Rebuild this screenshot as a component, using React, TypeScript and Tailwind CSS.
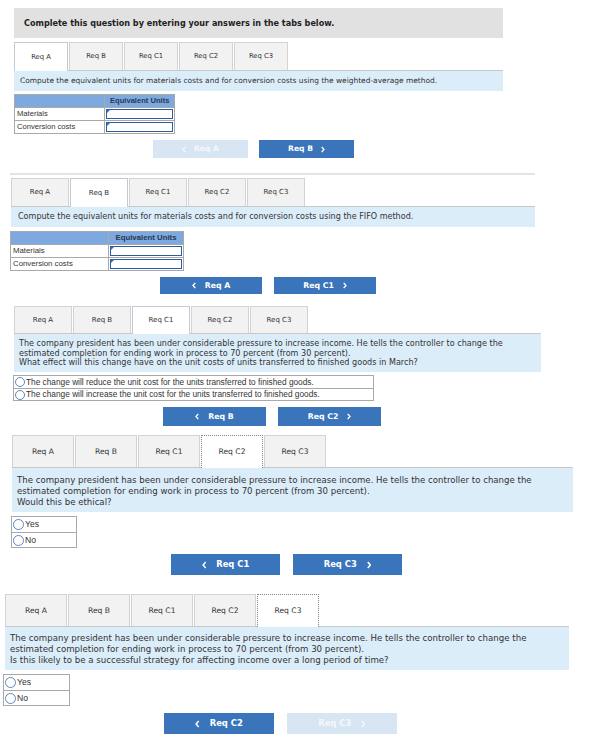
import React from "react";

const verdana = "[font-family:'DejaVu_Sans',Verdana,sans-serif]";
const arial = "[font-family:'Liberation_Sans',Arial,sans-serif]";

const TABS = ["Req A", "Req B", "Req C1", "Req C2", "Req C3"];

type TabsProps = {
  active: number;
  row: string;
  tab: string;
  dotted?: boolean;
};

function Tabs({ active, row, tab, dotted }: TabsProps) {
  return (
    <div className={`flex items-end gap-[1px] ${row}`}>
      {TABS.map((t, i) => {
        const on = i === active;
        const look = on
          ? dotted
            ? "bg-white border border-dotted border-[#7b8795] border-b-0 relative z-10 -mb-px h-[calc(100%+1px)]"
            : "bg-white border border-[#c3cad3] border-b-0 relative z-10 -mb-px h-[calc(100%+1px)]"
          : "bg-[#f2f2f2] border border-[#d3d3d3] border-b-0 h-full";
        return (
          <div
            key={t}
            className={`flex items-center justify-center text-[#333] ${verdana} ${tab} ${look}`}
          >
            {t}
          </div>
        );
      })}
    </div>
  );
}

function Chevron({ dir, cls }: { dir: "l" | "r"; cls: string }) {
  return (
    <svg viewBox="0 0 6 10" className={cls} fill="none" stroke="currentColor" strokeWidth="2">
      {dir === "l" ? <polyline points="5,1 1.5,5 5,9" /> : <polyline points="1,1 4.5,5 1,9" />}
    </svg>
  );
}

type NavProps = {
  prev: string;
  next: string;
  prevOff?: boolean;
  nextOff?: boolean;
  wrap: string;
  btn: string;
  icon: string;
};

function Nav({ prev, next, prevOff, nextOff, wrap, btn, icon }: NavProps) {
  const on = "bg-[#3a75bb] text-white";
  const off = "bg-[#d8e5f3] text-[#f4f8fc]";
  return (
    <div className={`flex ${wrap}`}>
      <div className={`flex items-center justify-center font-bold ${verdana} ${btn} ${prevOff ? off : on}`}>
        <Chevron dir="l" cls={icon} />
        <span>{prev}</span>
      </div>
      <div className={`flex items-center justify-center font-bold ${verdana} ${btn} ${nextOff ? off : on}`}>
        <span>{next}</span>
        <Chevron dir="r" cls={icon} />
      </div>
    </div>
  );
}

function InputCell({ cls }: { cls: string }) {
  return (
    <div className={`relative border border-[#2d5d9f] bg-white ${cls}`}>
      <div className="absolute left-0 top-0 w-0 h-0 border-t-[3px] border-r-[3px] border-t-[#2d6fd0] border-r-transparent" />
    </div>
  );
}

function UnitsTable({ wrap, col1, col2, head, row, text }: { wrap: string; col1: string; col2: string; head: string; row: string; text: string }) {
  return (
    <div className={`border border-[#a9a9a9] ${arial} ${text} text-[#333] ${wrap}`}>
      <div className={`flex bg-[#7da8e0] ${head}`}>
        <div className={`${col1} border-r border-[#a9a9a9]`} />
        <div className={`${col2} flex items-center justify-center font-bold text-[#2a3a50]`}>Equivalent Units</div>
      </div>
      {["Materials", "Conversion costs"].map((r) => (
        <div key={r} className={`flex border-t border-[#a9a9a9] ${row}`}>
          <div className={`${col1} flex items-center pl-[2px] border-r border-[#a9a9a9]`}>{r}</div>
          <div className={`${col2} p-px`}>
            <InputCell cls="h-full" />
          </div>
        </div>
      ))}
    </div>
  );
}

function Radio({ cls }: { cls: string }) {
  return <span className={`inline-block shrink-0 rounded-full border border-[#5f86bd] bg-white ${cls}`} />;
}

function Choices({ items, wrap, row, dot, text }: { items: string[]; wrap: string; row: string; dot: string; text: string }) {
  return (
    <div className={`border border-[#a9a9a9] bg-white ${arial} ${text} text-[#333] ${wrap}`}>
      {items.map((it, i) => (
        <div key={it} className={`flex items-center gap-[1px] pl-[1px] ${i > 0 ? "border-t border-[#a9a9a9]" : ""} ${row}`}>
          <Radio cls={dot} />
          <span>{it}</span>
        </div>
      ))}
    </div>
  );
}

const LEAD =
  "The company president has been under considerable pressure to increase income. He tells the controller to change the";
const EST = "estimated completion for ending work in process to 70 percent (from 30 percent).";

export default function App() {
  return (
    <div className="w-[598px] h-[740px] bg-white overflow-hidden">
      {/* Req A */}
      <div className="pt-[8px] pl-[14px] w-[503px]">
        <div className={`h-[30px] bg-[#e1e1e1] flex items-center pl-[10px] font-bold text-[8.1px] text-[#222] ${verdana}`}>
          Complete this question by entering your answers in the tabs below.
        </div>
        <Tabs active={0} row="mt-[4px] h-[28px]" tab="w-[54px] text-[6.8px]" />
        <div className={`h-[21px] bg-[#dcedfa] border-t border-[#c8c8c8] flex items-center pl-[6px] text-[7.46px] text-[#333] ${verdana}`}>
          Compute the equivalent units for materials costs and for conversion costs using the weighted-average method.
        </div>
        <UnitsTable
          wrap="mt-[3px] w-[161px]"
          col1="w-[91px]"
          col2="w-[69px]"
          head="h-[12px]"
          row="h-[13px]"
          text="text-[7.6px]"
        />
        <Nav
          prev="Req A"
          next="Req B"
          prevOff
          wrap="mt-[6px] pl-[139px] gap-[11px]"
          btn="w-[95px] h-[18px] gap-[8px] text-[7.6px]"
          icon="w-[4px] h-[7px]"
        />
      </div>

      {/* Req B */}
      <div className="pl-[10px] w-[535px]">
        <div className="mt-[15px] h-[2px] bg-[#e4e4e4]" />
        <Tabs active={1} row="mt-[3px] pl-[1px] h-[28px]" tab="w-[58px] text-[7px]" />
        <div className={`h-[21px] bg-[#dcedfa] border-t border-[#c8c8c8] flex items-center pl-[7px] ml-[1px] text-[8.05px] text-[#333] ${verdana}`}>
          Compute the equivalent units for materials costs and for conversion costs using the FIFO method.
        </div>
        <UnitsTable
          wrap="mt-[4px] w-[174px]"
          col1="w-[98px]"
          col2="w-[74px]"
          head="h-[12px]"
          row="h-[13px]"
          text="text-[7.8px]"
        />
        <Nav
          prev="Req A"
          next="Req C1"
          wrap="mt-[6px] pl-[150px] gap-[12px]"
          btn="w-[102px] h-[17px] gap-[9px] text-[7.8px]"
          icon="w-[4px] h-[7px]"
        />
      </div>

      {/* Req C1 */}
      <div className="pl-[14px] w-[541px]">
        <Tabs active={2} row="mt-[12px] h-[27px]" tab="w-[58px] text-[7px]" />
        <div className={`h-[39px] bg-[#dcedfa] border-t border-[#c8c8c8] pl-[5px] pt-[5px] text-[8.08px] leading-[9.5px] text-[#333] ${verdana}`}>
          <div>{LEAD}</div>
          <div>{EST}</div>
          <div>What effect will this change have on the unit costs of units transferred to finished goods in March?</div>
        </div>
        <Choices
          items={[
            "The change will reduce the unit cost for the units transferred to finished goods.",
            "The change will increase the unit cost for the units transferred to finished goods.",
          ]}
          wrap="mt-[3px] -ml-[1px] w-[361px]"
          row="h-[12px]"
          dot="w-[10px] h-[10px]"
          text="text-[8.3px]"
        />
        <Nav
          prev="Req B"
          next="Req C2"
          wrap="mt-[6px] pl-[149px] gap-[12px]"
          btn="w-[103px] h-[19px] gap-[9px] text-[7.8px]"
          icon="w-[4px] h-[7px]"
        />
      </div>

      {/* Req C2 */}
      <div className="pl-[12px] w-[573px]">
        <Tabs active={3} row="mt-[9px] h-[32px]" tab="w-[62px] text-[7.6px]" dotted />
        <div className={`h-[45px] bg-[#dcedfa] border-t border-[#c8c8c8] pl-[5px] pt-[7px] text-[8.6px] leading-[11px] text-[#333] ${verdana}`}>
          <div>{LEAD}</div>
          <div>{EST}</div>
          <div>Would this be ethical?</div>
        </div>
        <Choices
          items={["Yes", "No"]}
          wrap="mt-[4px] -ml-[1px] w-[66px]"
          row="h-[15px]"
          dot="w-[11px] h-[11px]"
          text="text-[8.6px]"
        />
        <Nav
          prev="Req C1"
          next="Req C3"
          wrap="mt-[6px] pl-[159px] gap-[13px]"
          btn="w-[109px] h-[21px] gap-[10px] text-[8.4px]"
          icon="w-[4.5px] h-[8px]"
        />
      </div>

      {/* Req C3 */}
      <div className="pl-[5px] w-[569px]">
        <Tabs active={4} row="mt-[19px] h-[32px]" tab="w-[62px] text-[7.6px]" dotted />
        <div className={`h-[44px] bg-[#dcedfa] border-t border-[#c8c8c8] pl-[5px] pt-[6px] text-[8.65px] leading-[11px] text-[#333] ${verdana}`}>
          <div>{LEAD}</div>
          <div>{EST}</div>
          <div>Is this likely to be a successful strategy for affecting income over a long period of time?</div>
        </div>
        <Choices
          items={["Yes", "No"]}
          wrap="mt-[4px] -ml-[2px] w-[67px]"
          row="h-[15px]"
          dot="w-[11px] h-[11px]"
          text="text-[8.6px]"
        />
        <Nav
          prev="Req C2"
          next="Req C3"
          nextOff
          wrap="mt-[7px] pl-[159px] gap-[13px]"
          btn="w-[110px] h-[21px] gap-[10px] text-[8.4px]"
          icon="w-[4.5px] h-[8px]"
        />
      </div>
    </div>
  );
}
